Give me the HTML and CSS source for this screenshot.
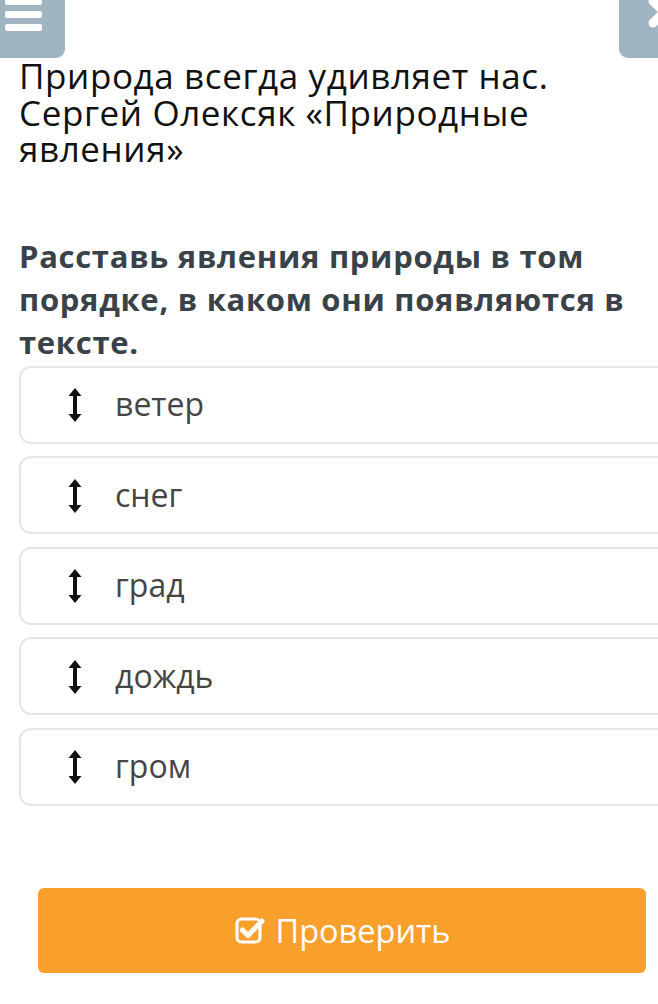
FILE: index.html
```html
<!DOCTYPE html>
<html lang="ru">
<head>
<meta charset="utf-8">
<link rel="stylesheet" href="styles.css">
</head>
<body>
<header class="topbar">
  <div class="menu-btn">
    <span class="bar"></span><span class="bar"></span><span class="bar"></span>
  </div>
  <div class="close-btn">
    <svg width="60" height="40" viewBox="0 0 60 40"><path d="M6 0 L28 22 M28 0 L6 22" stroke="#fff" stroke-width="9" stroke-linecap="round" fill="none" transform="translate(28 7)"/></svg>
  </div>
</header>
<main class="content">
  <h1 class="title">Природа всегда удивляет нас. Сергей Олексяк «Природные явления»</h1>
  <h2 class="question">Расставь явления природы в том порядке, в каком они появляются в тексте.</h2>
  <ul class="items">
    <li class="item"><svg class="arrow" viewBox="0 0 14 34" width="14" height="34"><path d="M7 0 L13.5 8 L9 8 L9 26 L13.5 26 L7 34 L0.5 26 L5 26 L5 8 L0.5 8 Z" fill="#111"/></svg><span>ветер</span></li>
    <li class="item"><svg class="arrow" viewBox="0 0 14 34" width="14" height="34"><path d="M7 0 L13.5 8 L9 8 L9 26 L13.5 26 L7 34 L0.5 26 L5 26 L5 8 L0.5 8 Z" fill="#111"/></svg><span>снег</span></li>
    <li class="item"><svg class="arrow" viewBox="0 0 14 34" width="14" height="34"><path d="M7 0 L13.5 8 L9 8 L9 26 L13.5 26 L7 34 L0.5 26 L5 26 L5 8 L0.5 8 Z" fill="#111"/></svg><span>град</span></li>
    <li class="item"><svg class="arrow" viewBox="0 0 14 34" width="14" height="34"><path d="M7 0 L13.5 8 L9 8 L9 26 L13.5 26 L7 34 L0.5 26 L5 26 L5 8 L0.5 8 Z" fill="#111"/></svg><span>дождь</span></li>
    <li class="item"><svg class="arrow" viewBox="0 0 14 34" width="14" height="34"><path d="M7 0 L13.5 8 L9 8 L9 26 L13.5 26 L7 34 L0.5 26 L5 26 L5 8 L0.5 8 Z" fill="#111"/></svg><span>гром</span></li>
  </ul>
  <div class="actions">
    <button class="check-btn">
      <svg class="check-icon" viewBox="0 0 30 30" width="30" height="30"><rect x="2" y="4" width="23" height="23" rx="4.5" fill="none" stroke="#fff" stroke-width="3.2"/><path d="M7.5 15 L13 20.5 L27 6" fill="none" stroke="#fff" stroke-width="5" stroke-linecap="round" stroke-linejoin="round"/></svg>
      <span>Проверить</span>
    </button>
  </div>
</main>
</body>
</html>
```

FILE: styles.css
```css
* { box-sizing: border-box; }
html, body { margin: 0; padding: 0; background: #fff; overflow: hidden; }
body { font-family: "Open Sans", "Noto Sans", sans-serif; width: 658px; height: 1004px; }

.topbar {
  display: flex;
  justify-content: space-between;
  height: 58px;
}
.menu-btn {
  width: 65px;
  height: 58px;
  background: #9fb3c1;
  border-radius: 0 0 9px 0;
  display: flex;
  flex-direction: column;
  gap: 6px;
  padding: 1px 0 0 5px;
}
.menu-btn .bar {
  display: block;
  width: 37px;
  height: 7px;
  background: #fff;
  border-radius: 2px;
}
.menu-btn .bar:first-child { height: 6px; margin-top: -2px; }
.close-btn {
  width: 44px;
  height: 58px;
  margin-right: -5px;
  background: #9fb3c1;
  border-radius: 0 0 0 9px;
  overflow: hidden;
}
.close-btn svg { display: block; margin-top: -6px; }

.content { padding: 0 0 0 19px; }

.title {
  margin: 0;
  font-weight: 400;
  font-size: 35px;
  line-height: 36.5px;
  letter-spacing: 0.6px;
  color: #111;
  padding-right: 40px;
}

.question {
  margin: 67px 0 0 0;
  font-weight: 700;
  font-size: 31px;
  line-height: 43px;
  letter-spacing: 0.7px;
  color: #3a4249;
  padding-right: 8px;
}

.items {
  list-style: none;
  margin: 2px 0 0 0;
  padding: 0;
  display: flex;
  flex-direction: column;
  gap: 12.5px;
}
.item {
  width: 660px;
  height: 78px;
  border: 2px solid #e3e5e7;
  border-radius: 12px;
  display: flex;
  align-items: center;
  padding-left: 47px;
  font-size: 32px;
  color: #454545;
}
.item .arrow { flex: none; margin-right: 33px; margin-top: 1px; }
.item span { margin-top: -2px; }

.actions {
  margin-top: 82px;
  padding-left: 19px;
}
.check-btn {
  width: 608px;
  height: 85px;
  border: none;
  border-radius: 6px;
  background: #f99f2c;
  color: #fff;
  font-family: "Open Sans", "Noto Sans", sans-serif;
  font-size: 32.5px;
  display: flex;
  align-items: center;
  justify-content: center;
  gap: 10px;
  padding: 0 0 0 2px;
}
.check-icon { flex: none; }
```
